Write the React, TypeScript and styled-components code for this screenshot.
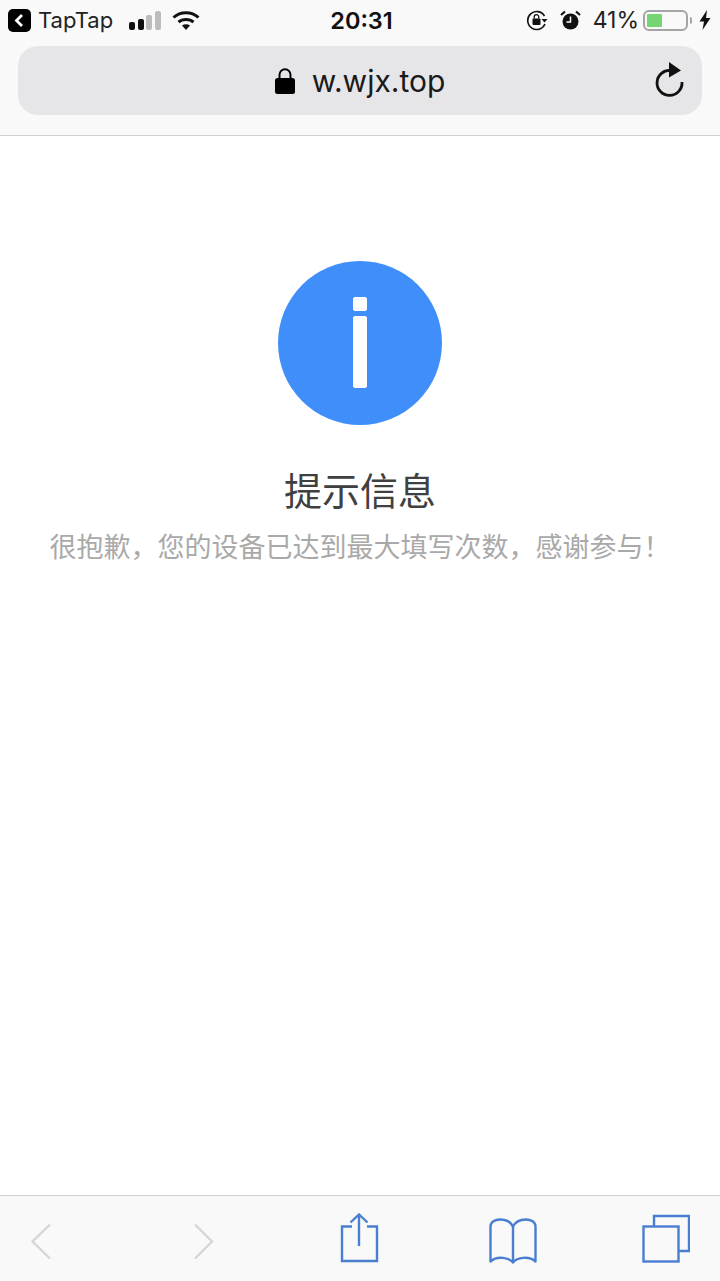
import React from 'react';
import styled, { createGlobalStyle } from 'styled-components';

const bars = [
  { height: 8, on: true },
  { height: 11, on: true },
  { height: 15, on: false },
  { height: 19, on: false },
];

export default function App() {
  return (
    <Page>
      <GlobalStyle />
      <Header>
        <StatusBar>
          <StatusLeft>
            <BackChip>
              <svg width="23" height="23" viewBox="0 0 23 23">
                <path d="M14 6l-5.500 5.500L14 17" fill="none" stroke="#fff" strokeWidth="2.800" />
              </svg>
            </BackChip>
            <Carrier>TapTap</Carrier>
            <Signal>
              {bars.map((bar, i) => (
                <SignalBar key={i} $height={bar.height} $on={bar.on} />
              ))}
            </Signal>
            <WifiIcon width="28" height="21" viewBox="0 0 28 21">
              <path d="M1.500 7.500C8.500 1 19.500 1 26.500 7.500" fill="none" stroke="#111" strokeWidth="3" />
              <path d="M6.500 12C10.500 8.500 17.500 8.500 21.500 12" fill="none" stroke="#111" strokeWidth="3" />
              <path d="M10 15.500C12.500 13.800 15.500 13.800 18 15.500L14 20z" fill="#111" />
            </WifiIcon>
          </StatusLeft>
          <Clock>20:31</Clock>
          <StatusRight>
            <svg width="22" height="22" viewBox="0 0 22 22">
              <path d="M18.500 7A9 9 0 1 0 19 15" fill="none" stroke="#111" strokeWidth="1.600" />
              <path d="M15.500 10h6l-3 3.500z" fill="#111" />
              <rect x="6.500" y="9.500" width="8" height="6.500" rx="1" fill="#111" />
              <path d="M8.200 9.500V8a2.300 2.300 0 0 1 4.600 0v1.500" fill="none" stroke="#111" strokeWidth="1.300" />
            </svg>
            <AlarmIcon width="21" height="21" viewBox="0 0 21 21">
              <circle cx="10.500" cy="11.500" r="8" fill="#111" />
              <path d="M10.500 6.500v5.500H6.500" fill="none" stroke="#fff" strokeWidth="1.500" />
              <path d="M1 5l4-3.500M20 5l-4-3.500" stroke="#111" strokeWidth="2.200" />
            </AlarmIcon>
            <Percent>41%</Percent>
            <Battery>
              <BatteryFill />
            </Battery>
            <BatteryNub />
            <BoltIcon width="12" height="20" viewBox="0 0 12 20">
              <path d="M8 0L0.500 11.500H5L3.500 20L11.500 8H7z" fill="#111" />
            </BoltIcon>
          </StatusRight>
        </StatusBar>
        <UrlBar>
          <Address>
            <svg width="20" height="26" viewBox="0 0 20 26">
              <rect x="0" y="10" width="20" height="16" rx="2.500" fill="#000" />
              <path d="M4.500 11V6.800a5.500 5.500 0 0 1 11 0V11" fill="none" stroke="#000" strokeWidth="2" />
            </svg>
            <UrlText>w.wjx.top</UrlText>
          </Address>
          <ReloadIcon width="30" height="36" viewBox="0 0 30 36">
            <path d="M17 9.500A12.500 12.500 0 1 0 28 21" fill="none" stroke="#111" strokeWidth="2.800" />
            <path d="M15 1l12 8.500-12 7z" fill="#111" />
          </ReloadIcon>
        </UrlBar>
      </Header>

      <Content>
        <InfoCircle>
          <InfoDot />
          <InfoStem />
        </InfoCircle>
        <Title>提示信息</Title>
        <Message>很抱歉，您的设备已达到最大填写次数，感谢参与！</Message>
      </Content>

      <Toolbar>
        <ToolIcon viewBox="0 0 48 52">
          <path d="M33 11.500L15.500 28.500L33 45.500" stroke="#d6d6d6" />
        </ToolIcon>
        <ToolIcon viewBox="0 0 48 52">
          <path d="M16 11.500L33 28.500L16 45.500" stroke="#d6d6d6" />
        </ToolIcon>
        <ToolIcon viewBox="0 0 48 52">
          <path d="M17 13.500H7V48H42V13.500H32" stroke="#4a7ed0" />
          <path d="M24 33V2M15.500 9.500L24 1.500L32.500 9.500" stroke="#4a7ed0" />
        </ToolIcon>
        <ToolIcon viewBox="0 0 48 52">
          <path
            d="M24 49.500C20 44.500 8 42.500 1.500 48.500V13.500C1.500 9 6 6.500 11 6.500C17 6.500 22 9 24 14C26 9 31 6.500 37 6.500C42 6.500 46.500 9 46.500 13.500V48.500C40 42.500 28 44.500 24 49.500ZM24 14V49.500"
            stroke="#4a7ed0"
            strokeLinejoin="round"
          />
        </ToolIcon>
        <ToolIcon viewBox="0 0 48 52">
          <rect x="1.500" y="13.500" width="35" height="35" stroke="#4a7ed0" />
          <path d="M12 13.500V3H47V38H36.500" stroke="#4a7ed0" />
        </ToolIcon>
      </Toolbar>
    </Page>
  );
}

const GlobalStyle = createGlobalStyle`
  html, body {
    margin: 0;
    padding: 0;
    background: #fff;
  }
`;

const Page = styled.div`
  width: 720px;
  height: 1281px;
  display: flex;
  flex-direction: column;
  overflow: hidden;
  font-family: Inter, 'Noto Sans CJK SC', sans-serif;
`;

const Header = styled.header`
  height: 136px;
  box-sizing: border-box;
  background: #f9f9f9;
  border-bottom: 1px solid #cfcfcf;
  display: flex;
  flex-direction: column;
`;

const StatusBar = styled.div`
  height: 40px;
  padding: 0 9px 0 8px;
  display: grid;
  grid-template-columns: 1fr auto 1fr;
  align-items: center;
  color: #111;
`;

const StatusLeft = styled.div`
  display: flex;
  align-items: center;
`;

const BackChip = styled.div`
  width: 23px;
  height: 23px;
  background: #000;
  border-radius: 5px;
  display: flex;

  svg {
    display: block;
  }
`;

const Carrier = styled.span`
  margin-left: 7px;
  font-size: 22px;
  letter-spacing: 0;
  color: #222;
`;

const Signal = styled.div`
  margin-left: 16px;
  height: 19px;
  display: flex;
  align-items: flex-end;
  gap: 2.600px;
`;

const SignalBar = styled.div<{ $height: number; $on: boolean }>`
  width: 6px;
  height: ${(p) => p.$height}px;
  border-radius: 2px;
  background: ${(p) => (p.$on ? '#111' : '#bdbdbd')};
`;

const WifiIcon = styled.svg`
  margin-left: 11px;
`;

const Clock = styled.div`
  margin-left: 4px;
  font-size: 23.500px;
  font-weight: 600;
`;

const StatusRight = styled.div`
  display: flex;
  align-items: center;
  justify-content: flex-end;
`;

const AlarmIcon = styled.svg`
  margin-left: 12px;
`;

const Percent = styled.span`
  margin-left: 12px;
  font-size: 23px;
  color: #222;
`;

const Battery = styled.div`
  margin-left: 4px;
  width: 45px;
  height: 21px;
  box-sizing: border-box;
  border: 2px solid #a5a5a5;
  border-radius: 6px;
  padding: 2px;
`;

const BatteryFill = styled.div`
  width: 41%;
  height: 100%;
  background: #74d572;
  border-radius: 1px;
`;

const BatteryNub = styled.div`
  margin-left: 2px;
  width: 2px;
  height: 7px;
  background: #a5a5a5;
  border-radius: 0 2px 2px 0;
`;

const BoltIcon = styled.svg`
  margin-left: 7px;
`;

const UrlBar = styled.div`
  position: relative;
  margin: 6px 18px 0;
  height: 69px;
  background: #e6e6e8;
  border-radius: 20px;
  display: flex;
  align-items: center;
  justify-content: center;
`;

const Address = styled.div`
  display: flex;
  align-items: center;
  gap: 17px;
`;

const UrlText = styled.span`
  font-size: 30px;
  color: #1a1a1a;
`;

const ReloadIcon = styled.svg`
  position: absolute;
  right: 18px;
  top: 15px;
`;

const Content = styled.main`
  flex: 1;
  background: #fff;
  padding-top: 125px;
  display: flex;
  flex-direction: column;
  align-items: center;
`;

const InfoCircle = styled.div`
  width: 164px;
  height: 164px;
  border-radius: 50%;
  background: #3f8ef9;
  display: flex;
  flex-direction: column;
  align-items: center;
  padding-top: 36px;
  box-sizing: border-box;
`;

const InfoDot = styled.div`
  width: 14px;
  height: 14px;
  border-radius: 2px;
  background: #fff;
`;

const InfoStem = styled.div`
  margin-top: 5px;
  width: 14px;
  height: 72px;
  border-radius: 2px;
  background: #fff;
`;

const Title = styled.h1`
  margin: 40px 0 0;
  font-size: 38px;
  line-height: 48px;
  font-weight: 400;
  color: #404040;
  font-family: 'Noto Sans CJK SC', sans-serif;
`;

const Message = styled.p`
  margin: 13px 0 0;
  font-size: 27px;
  line-height: 40px;
  font-weight: 400;
  color: #a9a9a9;
  white-space: nowrap;
  font-family: 'Noto Sans CJK SC', sans-serif;
`;

const Toolbar = styled.footer`
  height: 86px;
  box-sizing: border-box;
  background: #f9f9f9;
  border-top: 1px solid #cfcfcf;
  padding-left: 17px;
  display: grid;
  grid-template-columns: 162px 156px 154px 153px 48px;
  align-items: center;
`;

const ToolIcon = styled.svg`
  width: 48px;
  height: 52px;
  fill: none;
  stroke-width: 2.400;
`;
